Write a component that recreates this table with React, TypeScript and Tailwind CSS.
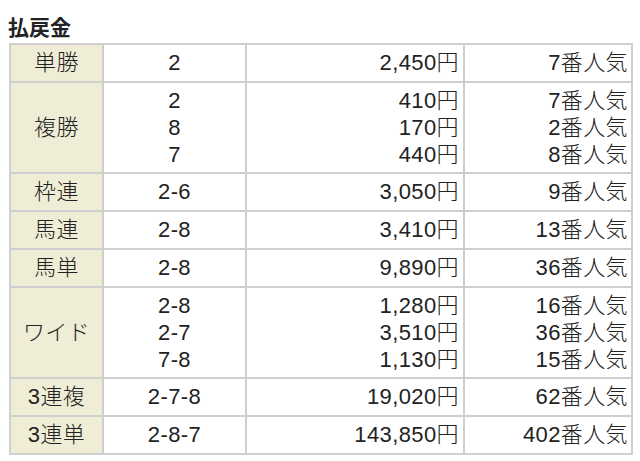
import React from "react";

interface Payout { combo: string; amount: string; rank: string }
interface Bet { type: string; items: Payout[] }

const bets: Bet[] = [
    { type: "単勝", items: [{ combo: "2", amount: "2,450円", rank: "7番人気" }] },
    {
        type: "複勝",
        items: [
            { combo: "2", amount: "410円", rank: "7番人気" },
            { combo: "8", amount: "170円", rank: "2番人気" },
            { combo: "7", amount: "440円", rank: "8番人気" },
        ],
    },
    { type: "枠連", items: [{ combo: "2-6", amount: "3,050円", rank: "9番人気" }] },
    { type: "馬連", items: [{ combo: "2-8", amount: "3,410円", rank: "13番人気" }] },
    { type: "馬単", items: [{ combo: "2-8", amount: "9,890円", rank: "36番人気" }] },
    {
        type: "ワイド",
        items: [
            { combo: "2-8", amount: "1,280円", rank: "16番人気" },
            { combo: "2-7", amount: "3,510円", rank: "36番人気" },
            { combo: "7-8", amount: "1,130円", rank: "15番人気" },
        ],
    },
    { type: "3連複", items: [{ combo: "2-7-8", amount: "19,020円", rank: "62番人気" }] },
    { type: "3連単", items: [{ combo: "2-8-7", amount: "143,850円", rank: "402番人気" }] },
];

const font = { fontFamily: '"Liberation Sans", "Noto Sans CJK JP", sans-serif' };

export default function App() {
    return (
        <div className="w-[640px] h-[461px] bg-white text-[#222222] overflow-hidden" style={font}>
            <h2
                className="pl-[8px] pt-[12px] mb-[3px] text-[21px] leading-[28px] font-bold"
                style={{ fontFamily: '"Noto Sans CJK JP", sans-serif' }}
            >
                払戻金
            </h2>
            <table className="ml-[9px] w-[624px] table-fixed border-collapse border-2 border-[#cfcfcf] text-[22px] font-light tracking-[0.4px]">
                <colgroup>
                    <col className="w-[93px]" />
                    <col className="w-[143px]" />
                    <col className="w-[218px]" />
                    <col className="w-[168px]" />
                </colgroup>
                <tbody>
                    {bets.map((b) => {
                        const multi = b.items.length > 1;
                        const lead = multi ? "leading-[27px]" : "leading-[28px]";
                        return (
                            <tr key={b.type}>
                                <th
                                    className={`border-2 border-[#cfcfcf] bg-[#efedd5] font-light text-center align-middle py-[4px] ${lead}`}
                                >
                                    {b.type}
                                </th>
                                <td className={`border-2 border-[#cfcfcf] text-center py-[4px] ${lead}`}>
                                    {b.items.map((it, i) => (
                                        <div key={i}>{it.combo}</div>
                                    ))}
                                </td>
                                <td className={`border-2 border-[#cfcfcf] text-right pr-[4px] py-[4px] ${lead}`}>
                                    {b.items.map((it, i) => (
                                        <div key={i}>{it.amount}</div>
                                    ))}
                                </td>
                                <td className={`border-2 border-[#cfcfcf] text-right pr-[3px] py-[4px] ${lead}`}>
                                    {b.items.map((it, i) => (
                                        <div key={i}>{it.rank}</div>
                                    ))}
                                </td>
                            </tr>
                        );
                    })}
                </tbody>
            </table>
        </div>
    );
}
